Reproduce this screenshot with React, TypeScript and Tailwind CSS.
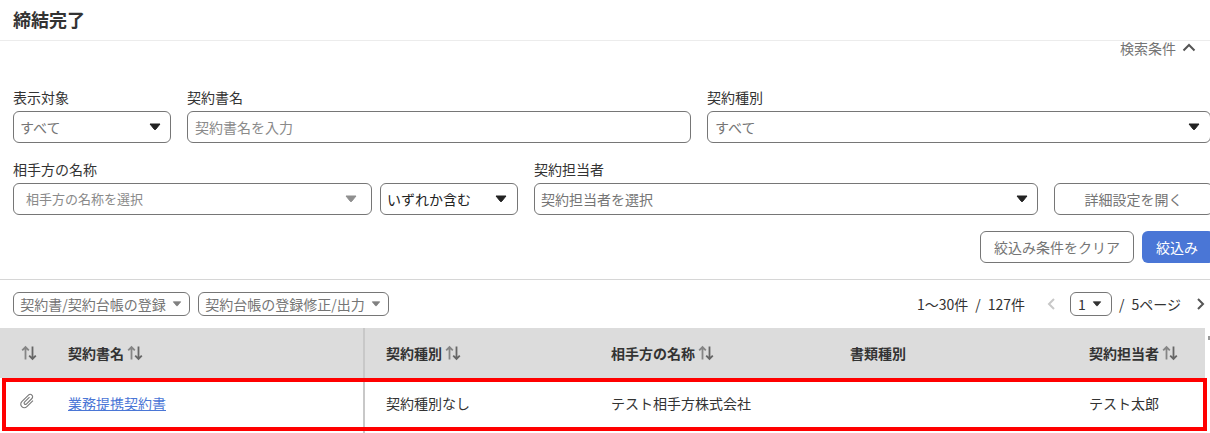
import React from 'react';
import { MdAttachFile } from 'react-icons/md';

const Caret = ({ className = 'text-[#222]' }: { className?: string }) => (
  <svg width="12" height="8" viewBox="0 0 12 8" className={`shrink-0 ${className}`}>
    <path d="M1 1 H11 L6.6 6.4 Q6 7 5.4 6.4 Z" fill="currentColor" stroke="currentColor" strokeWidth="1" strokeLinejoin="round" />
  </svg>
);

const SortIcon = () => (
  <svg width="16" height="16" viewBox="0 0 16 16" fill="none" className="shrink-0">
    <path d="M4.5 14.5 V2 M1.2 5.4 L4.5 2 L7.8 5.4" stroke="#858585" strokeWidth="1.8" />
    <path d="M11.5 1.5 V14 M8.2 10.6 L11.5 14 L14.8 10.6" stroke="#666" strokeWidth="1.8" />
  </svg>
);

const Chevron = ({ dir, color }: { dir: 'left' | 'right' | 'up'; color: string }) => {
  const d = dir === 'left' ? 'M8 2 L3 7 L8 12' : dir === 'right' ? 'M3 2 L8 7 L3 12' : 'M1.5 9.5 L7 4 L12.5 9.5';
  return (
    <svg width={dir === 'up' ? 14 : 11} height="14" viewBox={dir === 'up' ? '0 0 14 14' : '0 0 11 14'} fill="none" className="shrink-0">
      <path d={d} stroke={color} strokeWidth="2" />
    </svg>
  );
};

const fieldBox = 'h-8 flex items-center justify-between border border-[#767676] rounded-md bg-white text-sm';

const Field = ({ label, width, children }: { label: string; width: string; children: React.ReactNode }) => (
  <div className={`flex flex-col shrink-0 ${width}`}>
    <label className="text-sm leading-[20px] h-[24px] text-[#333]">{label}</label>
    {children}
  </div>
);

const HeadCell = ({ label, sort = true }: { label: string; sort?: boolean }) => (
  <div className="flex items-center gap-[3px] font-bold text-sm text-[#333]">
    <span>{label}</span>
    {sort && <SortIcon />}
  </div>
);

const cols = 'grid grid-cols-[225px_239px_239px_1fr]';

export default function App() {
  return (
    <div
      className="w-[1210px] h-[433px] overflow-hidden bg-white text-[#333]"
      style={{ fontFamily: '"Noto Sans CJK JP", "Noto Sans", sans-serif' }}
    >
      <div className="h-[41px] border-b border-[#ececec] pl-[13px] flex items-center">
        <h1 className="text-[18px] font-bold leading-none text-[#333] -mt-[2px]">締結完了</h1>
      </div>

      <div className="h-[14px] pr-[14px] flex justify-end items-start gap-[6px] text-sm text-[#757575]">
        <span className="leading-[14px]">検索条件</span>
        <Chevron dir="up" color="#555" />
      </div>

      <div className="w-[1214px] pl-[13px] pt-[32px]">
        <div className="flex gap-4">
          <Field label="表示対象" width="w-[158px]">
            <div className={`${fieldBox} pl-[6px] pr-[9px] text-[#757575]`}>
              <span>すべて</span>
              <Caret />
            </div>
          </Field>
          <Field label="契約書名" width="w-[504px]">
            <div className={`${fieldBox} pl-[7px] text-[#8a8a8a]`}>契約書名を入力</div>
          </Field>
          <Field label="契約種別" width="w-[504px]">
            <div className={`${fieldBox} pl-[7px] pr-[10px] text-[#757575]`}>
              <span>すべて</span>
              <Caret />
            </div>
          </Field>
        </div>

        <div className="flex mt-[16px]">
          <Field label="相手方の名称" width="w-[359px] mr-[8px]">
            <div className={`${fieldBox} pl-[12px] pr-[14px] text-[13px] text-[#8a8a8a]`}>
              <span>相手方の名称を選択</span>
              <Caret className="text-[#8f8f8f]" />
            </div>
          </Field>
          <div className="flex flex-col w-[138px] mr-[16px] shrink-0 pt-[24px]">
            <div className={`${fieldBox} pl-[6px] pr-[10px] text-[#222]`}>
              <span>いずれか含む</span>
              <Caret />
            </div>
          </div>
          <Field label="契約担当者" width="w-[504px] mr-[16px]">
            <div className={`${fieldBox} pl-[6px] pr-[9px] text-[#757575]`}>
              <span>契約担当者を選択</span>
              <Caret />
            </div>
          </Field>
          <div className="pt-[24px] shrink-0">
            <button className="w-[159px] h-8 border border-[#767676] rounded-md text-sm text-[#757575] bg-white">
              詳細設定を開く
            </button>
          </div>
        </div>

        <div className="flex mt-[16px] pl-[967px] gap-2">
          <button className="w-[154px] h-8 shrink-0 border border-[#767676] rounded-md text-sm text-[#757575] bg-white">
            絞込み条件をクリア
          </button>
          <button className="w-[72px] h-8 shrink-0 rounded-md text-sm text-white bg-[#4a76d6] pr-[2px]">
            絞込み
          </button>
        </div>
      </div>

      <div className="mt-[16px] border-t border-[#d6d6d6] h-[49px] pt-[12px] pl-[13px] pr-[4px] flex justify-between items-start">
        <div className="flex gap-2">
          <button className="w-[177px] h-6 flex items-center justify-center gap-[5px] border border-[#767676] rounded-md text-sm text-[#757575] bg-white">
            <span>契約書/契約台帳の登録</span>
            <Caret className="text-[#808080] scale-75" />
          </button>
          <button className="w-[191px] h-6 flex items-center justify-center gap-[5px] border border-[#767676] rounded-md text-sm text-[#757575] bg-white">
            <span>契約台帳の登録修正/出力</span>
            <Caret className="text-[#808080] scale-75" />
          </button>
        </div>
        <div className="flex items-center h-6 text-sm text-[#333]">
          <span>1〜30件</span>
          <span className="mx-[7px]">/</span>
          <span>127件</span>
          <span className="ml-[21px] mr-[13px] flex">
            <Chevron dir="left" color="#c8c8c8" />
          </span>
          <div className="w-[42px] h-6 border border-[#767676] rounded-md flex items-center justify-between pl-[7px] pr-[8px]">
            <span>1</span>
            <Caret className="scale-75" />
          </div>
          <span className="ml-[7px] mr-[7px]">/</span>
          <span>5ページ</span>
          <span className="ml-[14px] flex">
            <Chevron dir="right" color="#555" />
          </span>
        </div>
      </div>

      <div className="relative w-[1205px]">
        <div className="flex h-[50px] bg-[#dcdcdc]">
          <div className="w-[365px] shrink-0 border-r-2 border-[#c8c8c8] flex items-center">
            <div className="w-[68px] pl-[21px] shrink-0">
              <SortIcon />
            </div>
            <HeadCell label="契約書名" />
          </div>
          <div className={`${cols} flex-1 pl-[21px] items-center`}>
            <HeadCell label="契約種別" />
            <HeadCell label="相手方の名称" />
            <HeadCell label="書類種別" sort={false} />
            <HeadCell label="契約担当者" />
          </div>
        </div>
        <div className="absolute left-[1208px] top-[8px] w-[2px] h-[4px] bg-[#999]" />

        <div className="relative flex h-[55px] text-sm text-[#333]">
          <div className="w-[365px] shrink-0 border-r-2 border-[#c8c8c8] flex items-start">
            <div className="w-[68px] pl-[18px] pt-[14px] shrink-0">
              <MdAttachFile size={18} color="#7a7a7a" className="rotate-45" />
            </div>
            <a href="#" className="text-[#4a76d6] underline pt-[15px]">
              業務提携契約書
            </a>
          </div>
          <div className={`${cols} flex-1 pl-[21px] pt-[15px] items-start`}>
            <div>契約種別なし</div>
            <div>テスト相手方株式会社</div>
            <div />
            <div>テスト太郎</div>
          </div>
          <div className="absolute left-[2px] top-0 w-[1205px] h-[53px] border-4 border-[#ff0000] pointer-events-none" />
        </div>
      </div>
    </div>
  );
}
